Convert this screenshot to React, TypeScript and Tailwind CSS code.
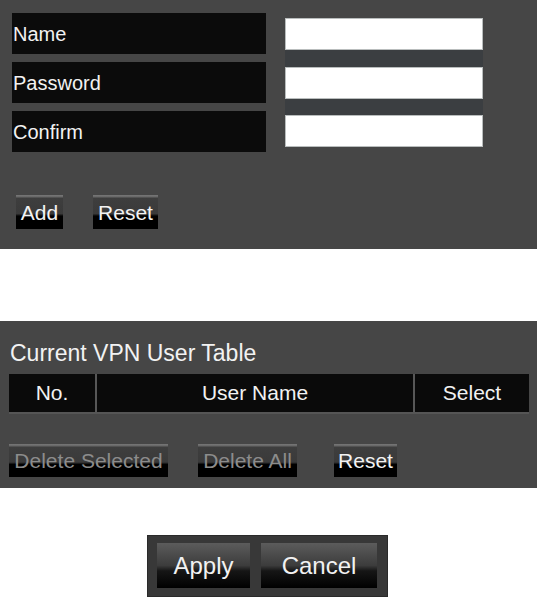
const btn =
  "flex items-center justify-center text-[21px] leading-none bg-[linear-gradient(to_bottom,#777_0px,#666_2px,#3e3e3e_3px,#3a3a3a_55%,#000_62%,#000_100%)]";

const labels = ["Name", "Password", "Confirm"];

export default function App() {
  return (
    <div className="w-[537px] min-h-[597px] bg-white font-['Liberation_Sans',Arial,sans-serif] text-[#f2f2f2]">
      {/* user form */}
      <section className="bg-[#464646] pt-[13px] pb-[20px] px-[12px]">
        <div className="flex flex-row items-start">
          <div className="flex flex-col gap-2 w-[254px]">
            {labels.map((l) => (
              <div key={l} className="h-[41px] bg-[#0b0b0b] flex items-center pl-[1px] text-[20px]">
                {l}
              </div>
            ))}
          </div>
          <div className="ml-[19px] mt-[5px] w-[198px] flex flex-col gap-[16.5px] bg-[#3b3e41]">
            {labels.map((l) => (
              <input
                key={l}
                type={l === "Name" ? "text" : "password"}
                className="h-[32px] w-full bg-white border border-[#b9bdbd] outline-none"
              />
            ))}
          </div>
        </div>
        <div className="flex flex-row gap-[30px] mt-[43px] ml-[4px]">
          <button className={`${btn} w-[47px] h-[34px]`}>Add</button>
          <button className={`${btn} w-[65px] h-[34px]`}>Reset</button>
        </div>
      </section>

      <div className="h-[72px]" />

      {/* user table */}
      <section className="bg-[#464646] pt-4 pb-[11px] px-[9px]">
        <div className="h-8 leading-8 text-[23px] pl-[1px]">Current VPN User Table</div>
        <div className="mt-[5px] w-[520px] flex flex-row gap-[2px] bg-[#575757] border-b-2 border-[#555]">
          <div className="w-[86px] h-[38px] bg-[#0a0a0a] flex items-center justify-center text-[21px]">No.</div>
          <div className="w-[316px] h-[38px] bg-[#0a0a0a] flex items-center justify-center text-[21px]">User Name</div>
          <div className="w-[114px] h-[38px] bg-[#0a0a0a] flex items-center justify-center text-[21px]">Select</div>
        </div>
        <div className="flex flex-row mt-[30px]">
          <button className={`${btn} w-[159px] h-[33px] text-[#8c8c8c]`} disabled>Delete Selected</button>
          <button className={`${btn} w-[99px] h-[33px] ml-[30px] text-[#8c8c8c]`} disabled>Delete All</button>
          <button className={`${btn} w-[63px] h-[33px] ml-[37px]`}>Reset</button>
        </div>
      </section>

      {/* apply */}
      <div className="flex justify-center mt-[47px]">
        <div className="ml-[-2px] w-[241px] flex flex-row gap-[11px] bg-[#383838] border border-[#2a2a2a] pl-[9px] pt-[7px] pb-[8px]">
          <button className="w-[93px] h-[45px] flex items-center justify-center text-[24px] bg-[linear-gradient(to_bottom,#5c5c5c_0%,#3c3c3c_50%,#161616_62%,#000_100%)]">
            Apply
          </button>
          <button className="w-[116px] h-[45px] flex items-center justify-center text-[24px] bg-[linear-gradient(to_bottom,#5c5c5c_0%,#3c3c3c_50%,#161616_62%,#000_100%)]">
            Cancel
          </button>
        </div>
      </div>
    </div>
  );
}
